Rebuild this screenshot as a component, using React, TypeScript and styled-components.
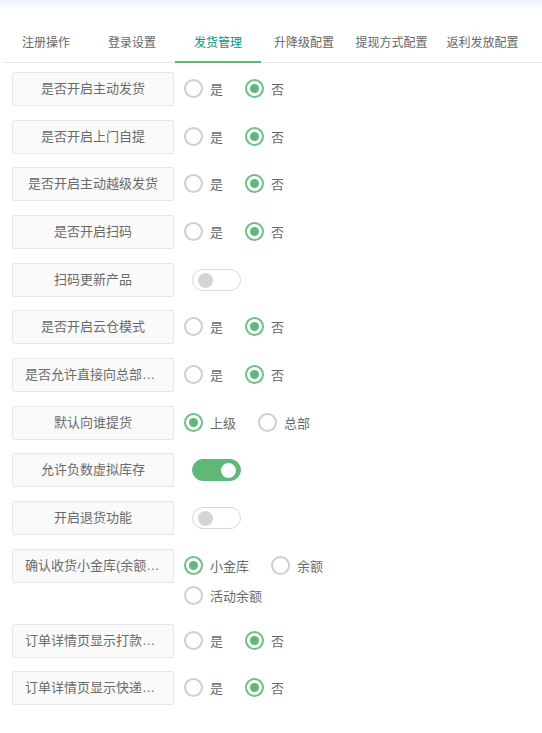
import React from "react";
import styled, { createGlobalStyle } from "styled-components";

const Global = createGlobalStyle`
  html, body { margin: 0; padding: 0; background: #fff; }
  body {
    font-family: "Liberation Sans", "Noto Sans CJK SC", sans-serif;
    color: #666;
  }
  * { box-sizing: border-box; }
`;

const Page = styled.div`
  width: 542px;
  min-height: 733px;
  background: linear-gradient(to bottom, #eaf2fd 0px, #ffffff 9px);
  padding-top: 24px;
  overflow: hidden;
`;

const TabBar = styled.div`
  display: flex;
  margin-left: 3px;
  height: 39px;
  border-bottom: 1px solid #e6e6e6;
`;

const Tab = styled.div<{ $w: number; $active?: boolean }>`
  position: relative;
  flex: none;
  width: ${(p) => p.$w}px;
  height: 38px;
  line-height: 38px;
  text-align: center;
  font-size: 12px;
  white-space: nowrap;
  color: ${(p) => (p.$active ? "#009688" : "#666")};
  &::after {
    content: "";
    display: ${(p) => (p.$active ? "block" : "none")};
    position: absolute;
    left: 0;
    right: 0;
    bottom: -1px;
    height: 2px;
    background: #5fb878;
  }
`;

const Form = styled.div`
  padding: 9px 0 0 12px;
`;

const Row = styled.div`
  display: flex;
  align-items: flex-start;
  margin-bottom: 13.67px;
`;

const Label = styled.div`
  flex: none;
  width: 162px;
  height: 34px;
  line-height: 32px;
  padding: 0 12px;
  border: 1px solid #e6e6e6;
  border-radius: 2px;
  background: #fafafa;
  font-size: 13px;
  color: #6a6a6a;
  text-align: center;
  white-space: nowrap;
  overflow: hidden;
  text-overflow: ellipsis;
`;

const Controls = styled.div`
  display: flex;
  flex-wrap: wrap;
  max-width: 240px;
  margin-left: 10px;
  padding-top: 1.5px;
`;

const Option = styled.div`
  display: flex;
  align-items: center;
  height: 30px;
  margin-right: 22px;
  font-size: 13px;
  color: #6a6a6a;
  white-space: nowrap;
`;

const Circle = styled.span<{ $on?: boolean }>`
  flex: none;
  width: 19px;
  height: 19px;
  border-radius: 50%;
  border: 2px solid ${(p) => (p.$on ? "#6cc08a" : "#cfcfcf")};
  margin-right: 7px;
  display: flex;
  align-items: center;
  justify-content: center;
  &::after {
    content: "";
    display: ${(p) => (p.$on ? "block" : "none")};
    width: 9px;
    height: 9px;
    border-radius: 50%;
    background: #5fb878;
  }
`;

const SwitchWrap = styled.div`
  height: 34px;
  display: flex;
  align-items: center;
  margin-left: 18px;
`;

const Switch = styled.div<{ $on?: boolean }>`
  position: relative;
  width: 49px;
  height: 22px;
  border-radius: 11px;
  border: 1px solid ${(p) => (p.$on ? "#5fb878" : "#d9d9d9")};
  background: ${(p) => (p.$on ? "#5fb878" : "#fff")};
  &::after {
    content: "";
    position: absolute;
    top: 3px;
    width: 15px;
    height: 15px;
    border-radius: 50%;
    ${(p) => (p.$on ? "right: 4px;" : "left: 5px;")}
    background: ${(p) => (p.$on ? "#fff" : "#d4d4d4")};
  }
`;

type Item =
  | { label: string; kind: "radio"; options: string[]; checked: number }
  | { label: string; kind: "switch"; on: boolean };

const yesNo = (label: string): Item => ({
  label,
  kind: "radio",
  options: ["是", "否"],
  checked: 1,
});

const items: Item[] = [
  yesNo("是否开启主动发货"),
  yesNo("是否开启上门自提"),
  yesNo("是否开启主动越级发货"),
  yesNo("是否开启扫码"),
  { label: "扫码更新产品", kind: "switch", on: false },
  yesNo("是否开启云仓模式"),
  yesNo("是否允许直接向总部进货"),
  { label: "默认向谁提货", kind: "radio", options: ["上级", "总部"], checked: 0 },
  { label: "允许负数虚拟库存", kind: "switch", on: true },
  { label: "开启退货功能", kind: "switch", on: false },
  {
    label: "确认收货小金库(余额)到账方式",
    kind: "radio",
    options: ["小金库", "余额", "活动余额"],
    checked: 0,
  },
  yesNo("订单详情页显示打款凭证"),
  yesNo("订单详情页显示快递信息"),
];

const tabs = [
  { t: "注册操作", w: 86 },
  { t: "登录设置", w: 86 },
  { t: "发货管理", w: 86, active: true },
  { t: "升降级配置", w: 86 },
  { t: "提现方式配置", w: 89 },
  { t: "返利发放配置", w: 93 },
];

export default function App() {
  return (
    <Page>
      <Global />
      <TabBar>
        {tabs.map((t) => (
          <Tab key={t.t} $w={t.w} $active={t.active}>
            {t.t}
          </Tab>
        ))}
      </TabBar>
      <Form>
        {items.map((it) => (
          <Row key={it.label}>
            <Label>{it.label}</Label>
            {it.kind === "radio" ? (
              <Controls>
                {it.options.map((o, i) => (
                  <Option key={o}>
                    <Circle $on={i === it.checked} />
                    {o}
                  </Option>
                ))}
              </Controls>
            ) : (
              <SwitchWrap>
                <Switch $on={it.on} />
              </SwitchWrap>
            )}
          </Row>
        ))}
      </Form>
    </Page>
  );
}
